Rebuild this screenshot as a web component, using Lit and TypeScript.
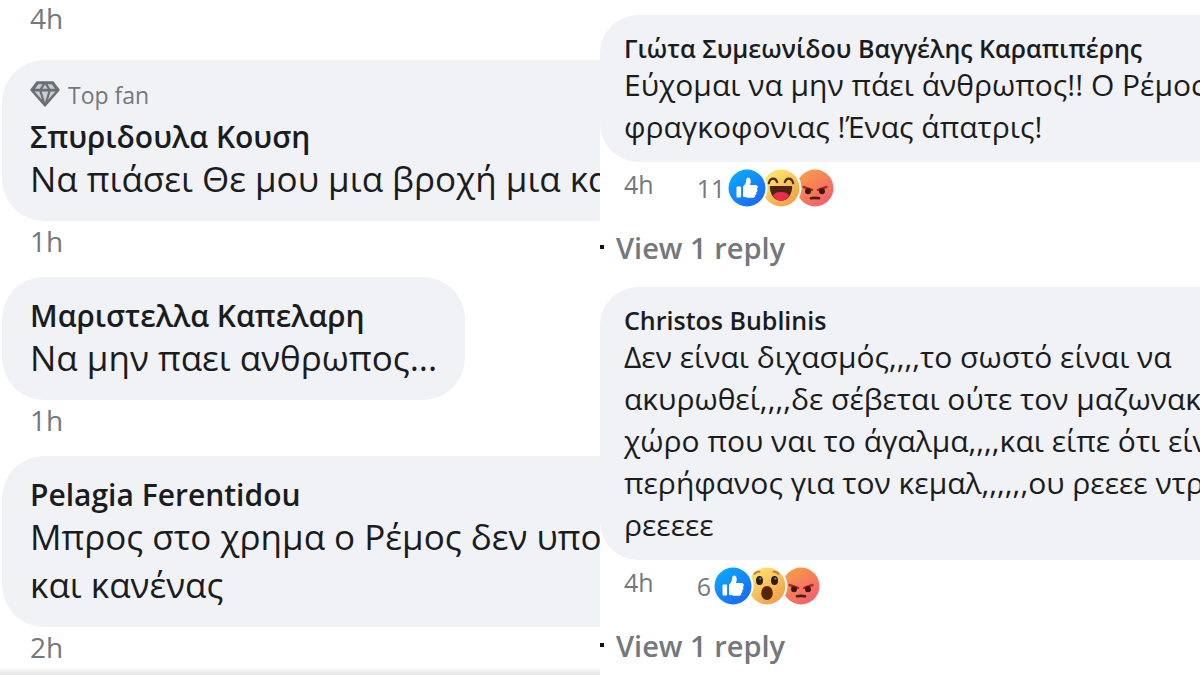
import { LitElement, html, css, svg, nothing } from "lit";
import { customElement, property } from "lit/decorators.js";
import { classMap } from "lit/directives/class-map.js";

type Reaction = "like" | "haha" | "wow" | "angry";

interface Comment {
  name: string;
  lines: string[];
  time: string;
  topFan?: boolean;
  fit?: boolean;
  count?: number;
  reactions?: Reaction[];
}

const LEFT: Comment[] = [
  { name: "Σπυριδουλα Κουση", lines: ["Να πιάσει Θε μου μια βροχή μια κα"], time: "1h", topFan: true },
  { name: "Μαριστελλα Καπελαρη", lines: ["Να μην παει ανθρωπος..."], time: "1h", fit: true },
  { name: "Pelagia Ferentidou", lines: ["Μπρος στο χρημα ο Ρέμος δεν υπο", "και κανένας"], time: "2h" },
];

const RIGHT: Comment[] = [
  {
    name: "Γιώτα Συμεωνίδου Βαγγέλης Καραπιπέρης",
    lines: ["Εύχομαι να μην πάει άνθρωπος!! Ο Ρέμος", "φραγκοφονιας !Ένας άπατρις!"],
    time: "4h",
    count: 11,
    reactions: ["like", "haha", "angry"],
  },
  {
    name: "Christos Bublinis",
    lines: [
      "Δεν είναι διχασμός,,,,το σωστό είναι να",
      "ακυρωθεί,,,,δε σέβεται ούτε τον μαζωνακ",
      "χώρο που ναι το άγαλμα,,,,και είπε ότι είν",
      "περήφανος για τον κεμαλ,,,,,,ου ρεεεε ντρ",
      "ρεεεεε",
    ],
    time: "4h",
    count: 6,
    reactions: ["like", "wow", "angry"],
  },
];

const FACES = {
  like: svg`
    <circle cx="21" cy="21" r="18.5" fill="url(#g)" />
    <rect x="10.500" y="19.500" width="4.600" height="11" rx="1" fill="#fff" />
    <path fill="#fff" d="M17 19.600c2-1.400 3.100-3.600 3.200-6.800.1-1.500.9-2.500 2-2.400 1.900.1 2.700 2 2.500 4.400-.1 1.300-.4 2.400-.7 3.200h5.500c1.500 0 2.400 1 2.300 2.200-.1.800-.5 1.300-1 1.600.6.500.8 1.200.6 1.900-.2.800-.7 1.300-1.300 1.500.4.500.5 1.100.3 1.700-.2.700-.7 1.100-1.300 1.300.2.500.2.900 0 1.300-.4.900-1.200 1.300-2.300 1.300h-4.900c-2 0-3.500-.4-4.900-1.200z" />`,
  haha: svg`
    <circle cx="21" cy="21" r="18.5" fill="url(#g)" />
    <path d="M8.800 16.200c.8-3.200 2.500-4.600 4.500-4.600 1.800 0 3.200 1.200 3.900 3.600M24.800 15.200c.7-2.400 2.100-3.600 3.900-3.600 2 0 3.700 1.400 4.500 4.600" fill="none" stroke="#4b2f0c" stroke-width="2.200" stroke-linecap="round" />
    <path d="M9.800 20.200c-.1-.9.400-1.300 1.300-1.300h19.800c.9 0 1.400.4 1.300 1.300-.6 8-4.800 13.600-11.200 13.600s-10.600-5.600-11.200-13.600z" fill="#4a2612" />
    <path d="M13 28.400c1.200-2.300 4-3.400 8-3.400s6.800 1.100 8 3.400c-1.800 3.500-4.500 5.400-8 5.400s-6.200-1.900-8-5.400z" fill="#ee2b4c" />`,
  wow: svg`
    <circle cx="21" cy="21" r="18.500" fill="url(#g)" />
    <path d="M8.500 9c1-1.700 2.700-2.500 5-2.400M27.500 6.600c2.300-.1 4 .7 5 2.400" fill="none" stroke="#d86b2e" stroke-width="1.800" stroke-linecap="round" />
    <ellipse cx="13.500" cy="15.400" rx="3.500" ry="4.500" fill="#2c1d16" />
    <ellipse cx="28.500" cy="15.400" rx="3.500" ry="4.500" fill="#2c1d16" />
    <circle cx="14.300" cy="13.600" r="1.200" fill="#6b7c93" />
    <circle cx="29.300" cy="13.600" r="1.200" fill="#6b7c93" />
    <ellipse cx="21" cy="28" rx="5.800" ry="7" fill="#512708" />`,
  angry: svg`
    <circle cx="21" cy="21" r="18.500" fill="url(#g)" />
    <path d="M9.500 20l8.500 2.800M32.500 20l-8.500 2.800" stroke="#b8232b" stroke-width="2.400" stroke-linecap="round" />
    <ellipse cx="14" cy="24.300" rx="3" ry="3" fill="#3a1a14" />
    <ellipse cx="28" cy="24.300" rx="3" ry="3" fill="#3a1a14" />
    <path d="M17 31.200c1.200-.5 6.800-.5 8 0" fill="none" stroke="#4a1f12" stroke-width="2.600" stroke-linecap="round" />`,
};

const GRADIENTS: Record<Reaction, string[]> = {
  like: ["#0aa5ff", "#1b6bf3"],
  haha: ["#ffe66f", "#f2a04b"],
  wow: ["#ffe16b", "#f0a04c"],
  angry: ["#f79a4b", "#f5606a"],
};

@customElement("reaction-icon")
export class ReactionIcon extends LitElement {
  @property() kind: Reaction = "like";

  static styles = css`
    :host { display: block; }
    .icon { display: block; width: 42px; height: 42px; }
  `;

  render() {
    const [from, to] = GRADIENTS[this.kind];
    return html`
      <svg class="icon" viewBox="0 0 42 42" role="img" aria-label=${this.kind}>
        <defs>
          <linearGradient id="g" x1="0.2" y1="0.1" x2="0.8" y2="0.9">
            <stop offset="0" stop-color=${from} />
            <stop offset="1" stop-color=${to} />
          </linearGradient>
        </defs>
        <circle cx="21" cy="21" r="20.500" fill="#fff" />
        ${FACES[this.kind]}
      </svg>
    `;
  }
}

@customElement("app-root")
export class AppRoot extends LitElement {
  static styles = css`
    :host {
      display: block;
      height: 100vh;
      overflow: hidden;
      background: #fff;
      color: #1a1c20;
      font-family: "Open Sans", "Noto Sans", sans-serif;
    }
    .page { display: grid; grid-template-columns: 1fr 1fr; height: 100%; }
    .column { min-width: 0; overflow: hidden; white-space: nowrap; }
    .left {
      padding-left: 2px;
      background: linear-gradient(to top, #e2e3e4 0, #fff 8px);
    }
    .right { padding-top: 15px; }
    .comment { display: block; }
    .bubble { background: #f0f2f5; }
    a { color: inherit; text-decoration: none; }
    button {
      padding: 0;
      border: 0;
      background: none;
      color: inherit;
      font: inherit;
    }
    .name { display: block; font-weight: 600; }
    .text { margin: 0; }
    .line { display: block; }
    .time, .count, .replies, .badge { color: #74777c; }

    .left .bubble { padding: 21px 28px 18px; border-radius: 42px 0 0 42px; }
    .left .bubble.fit { width: fit-content; border-radius: 42px; }
    .left .name { font-size: 30px; line-height: 36px; }
    .left .text { font-size: 35px; line-height: 48px; }
    .left .meta { height: 56px; padding-left: 28px; font-size: 28px; line-height: 40px; }
    .left .earlier { height: 60px; line-height: 36px; }

    .badge {
      display: flex;
      align-items: flex-start;
      gap: 8px;
      height: 38px;
      font-size: 23px;
      font-weight: 500;
      line-height: 28px;
    }
    .gem { display: block; width: 30px; height: 26px; }

    .right .bubble { padding: 17px 24px 14px; border-radius: 38px 0 0 38px; }
    .right .name { font-size: 25px; line-height: 32px; }
    .right .text { font-size: 30px; line-height: 42px; }
    .right .meta {
      display: flex;
      align-items: center;
      height: 52px;
      padding-left: 24px;
      font-size: 25px;
      line-height: 32px;
    }
    .right .time { padding-bottom: 8px; margin-right: 43px; }
    .reactions { display: flex; align-items: center; gap: 1px; }
    .icons { display: flex; }
    .icons reaction-icon + reaction-icon { margin-left: -8px; }
    .icons reaction-icon:nth-child(1) { z-index: 3; }
    .icons reaction-icon:nth-child(2) { z-index: 2; }
    .icons reaction-icon:nth-child(3) { z-index: 1; }
    .replies {
      display: flex;
      align-items: center;
      gap: 12px;
      height: 66px;
      margin-bottom: 7px;
      font-size: 29px;
      font-weight: 600;
    }
    .dot { width: 4px; height: 4px; background: #111; }
  `;

  private badge() {
    return html`
      <div class="badge">
        <svg class="gem" viewBox="0 0 30 26" aria-hidden="true">
          <path d="M7 1h16l6 8-14 16L1 9z" fill="#6b6f76" stroke="#6b6f76" stroke-width="1.500" stroke-linejoin="round" />
          <path d="M8.300 3.200h4.200l-2.700 4.600H5zM17.500 3.200h4.200L25 7.800h-4.800zM15 3.400l2.700 4.400h-5.400zM4.500 10.400h4.900l2.600 8.400zM20.600 10.400h4.900L18 18.800zM11.700 10.400h6.600L15 21.500z" fill="#c9ccd1" />
        </svg>
        <span>Top fan</span>
      </div>
    `;
  }

  private comment(c: Comment) {
    return html`
      <article class="comment">
        <div class=${classMap({ bubble: true, fit: !!c.fit })}>
          ${c.topFan ? this.badge() : nothing}
          <a class="name" href="#">${c.name}</a>
          <p class="text">${c.lines.map((l) => html`<span class="line">${l}</span>`)}</p>
        </div>
        <div class="meta">
          <a class="time" href="#">${c.time}</a>
          ${c.reactions
            ? html`<button class="reactions">
                <span class="count">${c.count}</span>
                <span class="icons">
                  ${c.reactions.map((r) => html`<reaction-icon .kind=${r}></reaction-icon>`)}
                </span>
              </button>`
            : nothing}
        </div>
        ${c.reactions
          ? html`<div class="replies"><span class="dot"></span><button>View 1 reply</button></div>`
          : nothing}
      </article>
    `;
  }

  render() {
    return html`
      <main class="page">
        <section class="column left">
          <div class="meta earlier"><a class="time" href="#">4h</a></div>
          ${LEFT.map((c) => this.comment(c))}
        </section>
        <section class="column right">${RIGHT.map((c) => this.comment(c))}</section>
      </main>
    `;
  }
}
